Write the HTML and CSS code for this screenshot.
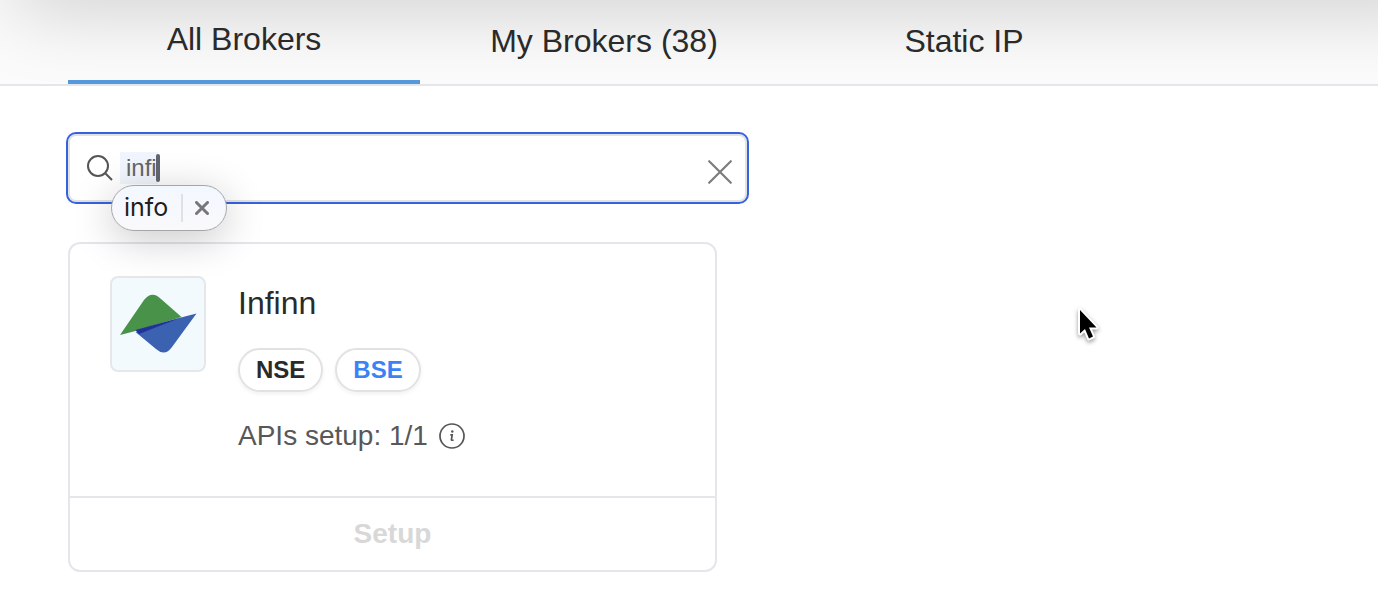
FILE: index.html
```html
<!DOCTYPE html>
<html lang="en">

<head>
    <meta charset="UTF-8">
    <meta name="viewport" content="width=device-width, initial-scale=1.0">
    <title>All Brokers</title>
    <link rel="stylesheet" href="styles.css">
</head>

<body>
    <header class="top">
        <nav class="tabs">
            <button class="tab active" type="button">All Brokers</button>
            <button class="tab" type="button">My Brokers (38)</button>
            <button class="tab" type="button">Static IP</button>
        </nav>
    </header>

    <main class="content">
        <div class="search">
            <svg class="search-icon" viewBox="0 0 26 26" aria-hidden="true">
                <circle cx="11" cy="11" r="10" />
                <path d="M18.5 18.5L25 25" />
            </svg>
            <div class="search-field">
                <input type="text" id="broker-search" aria-label="Search brokers" value="infi" autocomplete="off">
                <span class="caret"></span>
            </div>
            <button class="clear-btn" type="button" aria-label="Clear search">
                <svg viewBox="0 0 24 24"><path d="M2 2L22 22M22 2L2 22" /></svg>
            </button>

            <!-- Spelling suggestion -->
            <div class="suggestion">
                <span class="suggestion-word">info</span>
                <button class="dismiss-btn" type="button" aria-label="Dismiss suggestion">
                    <svg viewBox="0 0 14 14"><path d="M1.500 1.500L12.500 12.500M12.500 1.500L1.500 12.500" /></svg>
                </button>
            </div>
        </div>

        <article class="card">
            <div class="card-body">
                <div class="logo">
                    <svg viewBox="0 0 92 92" aria-hidden="true">
                        <path fill="#499249" d="M8 57L32 22Q40 12 49 21L69.500 39L23.500 53Z" />
                        <path fill="#3b61b1" d="M84.500 35.500L60 69Q53 79 44 71L23.500 54L69 39.500Z" />
                        <path fill="#22309b" d="M23.500 52L69 39.500L27 56Z" />
                    </svg>
                </div>
                <div class="details">
                    <h2 class="name">Infinn</h2>
                    <div class="exchanges">
                        <span class="pill">NSE</span>
                        <span class="pill pill-blue">BSE</span>
                    </div>
                    <div class="apis">
                        <span>APIs setup: 1/1</span>
                        <svg class="info-icon" viewBox="0 0 28 28" aria-hidden="true">
                            <circle class="ring" cx="14" cy="14" r="12" />
                            <circle class="dot" cx="14.300" cy="9.500" r="1.200" />
                            <path d="M12.300 12.800H14.200L13.400 17.800Q13.400 18.600 15.600 18" />
                        </svg>
                    </div>
                </div>
            </div>
            <button class="setup-btn" type="button" disabled>Setup</button>
        </article>
    </main>

    <svg class="pointer" viewBox="0 0 26 40" aria-hidden="true">
        <path d="M4 4V27.500L9 23L13 32.500L17 30.500L13 21.500H20.500Z" />
    </svg>
</body>

</html>
```

FILE: styles.css
```css
* {
    box-sizing: border-box;
}

body {
    margin: 0;
    font-family: "Liberation Sans", Arial, sans-serif;
    background-color: #ffffff;
    color: #2a2a2a;
}

button {
    padding: 0;
    border: none;
    background: none;
    font-family: inherit;
    cursor: pointer;
}

.top {
    position: relative;
    overflow: hidden;
    padding: 0 68px;
    background-color: #fbfbfb;
    border-bottom: 2px solid #e5e5ea;
}

/* shadow falling on the header from above */
.top::before {
    content: "";
    position: absolute;
    top: -60px;
    left: 14px;
    right: -80px;
    height: 60px;
    box-shadow: 0 4px 80px rgba(0, 0, 0, 0.22);
}

.tabs {
    position: relative;
    display: flex;
    gap: 8px;
}

.tab {
    width: 352px;
    height: 84px;
    padding-bottom: 2px;
    font-size: 32px;
    color: #2a2a2a;
}

.tab.active {
    border-bottom: 4px solid #5599dc;
}

.content {
    padding: 48px 68px 38px;
}

.search {
    position: relative;
    display: flex;
    align-items: center;
    max-width: 679px;
    height: 68px;
    padding: 0 12px 0 17px;
    border: 2px solid #e2e2e2;
    border-radius: 8px;
    outline: 2px solid #3662de;
}

.search-icon {
    width: 26px;
    height: 26px;
    fill: none;
    stroke: #555555;
    stroke-width: 2;
}

.search-field {
    position: relative;
    flex: 1;
    margin-left: 7px;
}

.search-field input {
    display: block;
    width: 100%;
    height: 32px;
    padding: 0 6px;
    border: none;
    outline: none;
    font-family: inherit;
    font-size: 24px;
    color: #666666;
    background: linear-gradient(#f1f6fe, #f1f6fe) no-repeat left / 38px 100%;
}

.caret {
    position: absolute;
    top: 2px;
    left: 36px;
    width: 4px;
    height: 28px;
    border-radius: 2px;
    background-color: #626670;
}

.clear-btn {
    margin-top: 8px;
}

.clear-btn svg {
    display: block;
    width: 26px;
    height: 26px;
    fill: none;
    stroke: #7c7c7c;
    stroke-width: 2;
    stroke-linecap: round;
}

.suggestion {
    position: absolute;
    top: 49px;
    left: 41px;
    display: flex;
    align-items: center;
    height: 46px;
    padding: 0 17px 0 12px;
    border: 1px solid #a5a5aa;
    border-radius: 23px;
    background: linear-gradient(#f3f7ff, #f9f9fb);
    box-shadow: 0 8px 40px rgba(0, 0, 0, 0.22);
}

.suggestion-word {
    padding: 0 13px 2px 0;
    font-family: Inter, sans-serif;
    font-size: 25px;
    color: #1e1e1e;
}

.dismiss-btn {
    height: 28px;
    padding-left: 12px;
    border-left: 2px solid #dfe1e6;
}

.dismiss-btn svg {
    display: block;
    width: 14px;
    height: 14px;
    fill: none;
    stroke: #77777a;
    stroke-width: 3;
    stroke-linecap: round;
}

.card {
    max-width: 649px;
    margin-top: 40px;
    border: 2px solid #e5e5ea;
    border-radius: 12px;
}

.card-body {
    display: flex;
    gap: 32px;
    padding: 32px 40px 40px;
}

.logo {
    width: 96px;
    height: 96px;
    border: 2px solid #e5e7eb;
    border-radius: 8px;
    background-color: #f2fafd;
}

.logo svg {
    display: block;
}

.name {
    margin: 0 0 18px;
    font-size: 32px;
    font-weight: normal;
    line-height: 54px;
}

.exchanges {
    display: flex;
    gap: 12px;
}

.pill {
    height: 44px;
    padding: 0 16px;
    border: 2px solid #e2e2e2;
    border-radius: 22px;
    box-shadow: 0 2px 4px rgba(0, 0, 0, 0.06);
    font-size: 24px;
    font-weight: bold;
    line-height: 40px;
}

.pill-blue {
    color: #3b82f6;
}

.apis {
    display: flex;
    align-items: center;
    gap: 10px;
    margin-top: 24px;
    font-size: 28px;
    line-height: 40px;
    color: #585858;
}

.info-icon {
    width: 28px;
    height: 28px;
    fill: none;
    stroke: #555555;
    stroke-width: 1.7;
}

.info-icon .dot {
    fill: #555555;
    stroke: none;
}

.setup-btn {
    display: block;
    width: 100%;
    height: 74px;
    border-top: 2px solid #e5e5ea;
    font-size: 28px;
    font-weight: bold;
    color: #d8d8d8;
    cursor: default;
}

.pointer {
    position: absolute;
    top: 306px;
    left: 1076px;
    width: 26px;
    height: 40px;
    fill: #000000;
    stroke: #ffffff;
    stroke-width: 4;
    stroke-linejoin: round;
    paint-order: stroke;
    filter: drop-shadow(0 2px 2px rgba(0, 0, 0, 0.4));
}
```
